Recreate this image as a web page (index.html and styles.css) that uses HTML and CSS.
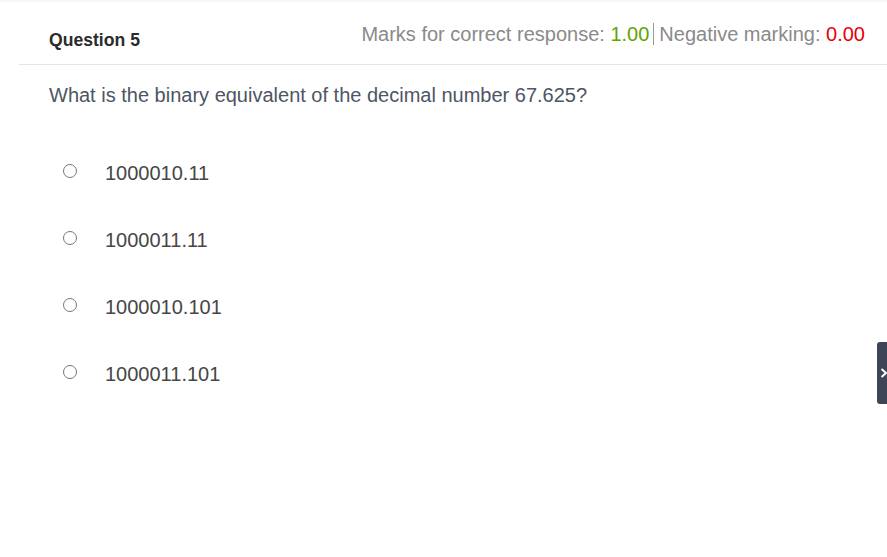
FILE: index.html
```html
<!DOCTYPE html>
<html lang="en">
<head>
<meta charset="utf-8">
<title>Question 5</title>
<link rel="stylesheet" href="styles.css">
</head>
<body>
<div class="topshade"></div>
<main class="page">
  <header class="qhead">
    <h2 class="qtitle">Question 5</h2>
    <div class="marks">Marks for correct response: <span class="pos">1.00</span><span class="sep"></span>Negative marking: <span class="neg">0.00</span></div>
  </header>
  <section class="qbody">
    <p class="qtext">What is the binary equivalent of the decimal number 67.625?</p>
    <ul class="options">
      <li class="option"><span class="radio"></span><span class="otext">1000010.11</span></li>
      <li class="option"><span class="radio"></span><span class="otext">1000011.11</span></li>
      <li class="option"><span class="radio"></span><span class="otext">1000010.101</span></li>
      <li class="option"><span class="radio"></span><span class="otext">1000011.101</span></li>
    </ul>
  </section>
</main>
<div class="sidetab"><svg width="8" height="12" viewBox="0 0 8 12"><path d="M1.5 2 L6 6 L1.5 10" fill="none" stroke="#fff" stroke-width="2"/></svg></div>
</body>
</html>
```

FILE: styles.css
```css
html, body {
  margin: 0;
  padding: 0;
  background: #fff;
  font-family: "Liberation Sans", Arial, sans-serif;
}
.topshade {
  height: 3px;
  background: linear-gradient(#f3f3f3, #fff);
}
.page {
  padding-left: 19px;
}
.qhead {
  display: flex;
  justify-content: space-between;
  align-items: flex-start;
  padding: 19px 22px 0 30px;
  box-sizing: border-box;
  height: 62px;
  border-bottom: 1px solid #e4e4e4;
}
.qtitle {
  margin: 8px 0 0 0;
  font-size: 17.6px;
  line-height: 20px;
  font-weight: bold;
  color: #2b2b2b;
}
.marks {
  font-size: 20px;
  line-height: 24px;
  color: #8a8a8a;
  display: flex;
  align-items: center;
  white-space: pre;
}
.pos { color: #62a400; }
.neg { color: #e6000a; }
.sep {
  display: inline-block;
  width: 1px;
  height: 22px;
  background: #9a9a9a;
  margin: 0 5px 0 4px;
}
.qbody {
  padding-left: 30px;
}
.qtext {
  margin: 18px 0 0 0;
  font-size: 20px;
  line-height: 24px;
  color: #4e5563;
}
.options {
  list-style: none;
  margin: 54px 0 0 0;
  padding: 0;
  display: flex;
  flex-direction: column;
  gap: 43.1px;
}
.option {
  display: flex;
  align-items: flex-start;
  padding-left: 14px;
}
.radio {
  width: 14px;
  height: 14px;
  box-sizing: border-box;
  border: 1.5px solid #767676;
  border-radius: 50%;
  margin-top: 3px;
  flex: none;
}
.otext {
  margin-left: 28px;
  font-size: 20px;
  line-height: 24px;
  color: #464646;
}
.sidetab {
  position: fixed;
  right: 0;
  top: 342px;
  width: 10px;
  height: 62px;
  background: #3e4556;
  border-radius: 3px 0 0 3px;
  display: flex;
  align-items: center;
  justify-content: flex-end;
}
.sidetab svg {
  margin-right: -1px;
}
```
